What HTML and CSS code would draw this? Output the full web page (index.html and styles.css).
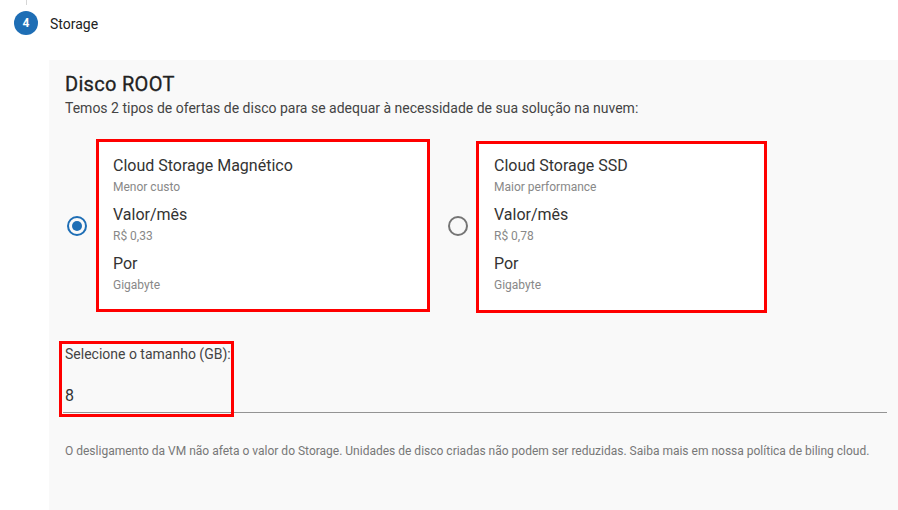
FILE: index.html
```html
<!DOCTYPE html>
<html lang="pt-BR">
<head>
<meta charset="utf-8">
<title>Storage</title>
<link rel="stylesheet" href="styles.css">
</head>
<body>
<div class="step">
  <div class="step-marker">
    <span class="step-line"></span>
    <span class="step-num">4</span>
  </div>
  <span class="step-label">Storage</span>
</div>
<section class="panel">
  <h2 class="panel-title">Disco ROOT</h2>
  <p class="panel-sub">Temos 2 tipos de ofertas de disco para se adequar à necessidade de sua solução na nuvem:</p>
  <div class="options">
    <label class="option">
      <span class="radio checked"></span>
      <div class="card card-a">
        <div class="item-title">Cloud Storage Magnético</div>
        <div class="item-sub">Menor custo</div>
        <div class="item-title gap">Valor/mês</div>
        <div class="item-sub">R$ 0,33</div>
        <div class="item-title gap">Por</div>
        <div class="item-sub">Gigabyte</div>
      </div>
    </label>
    <label class="option option-b">
      <span class="radio"></span>
      <div class="card card-b">
        <div class="item-title">Cloud Storage SSD</div>
        <div class="item-sub">Maior performance</div>
        <div class="item-title gap">Valor/mês</div>
        <div class="item-sub">R$ 0,78</div>
        <div class="item-title gap">Por</div>
        <div class="item-sub">Gigabyte</div>
      </div>
    </label>
  </div>
  <div class="field">
    <div class="field-label">Selecione o tamanho (GB):</div>
    <div class="field-value">8</div>
    <span class="highlight"></span>
  </div>
  <p class="note">O desligamento da VM não afeta o valor do Storage. Unidades de disco criadas não podem ser reduzidas. Saiba mais em nossa política de biling cloud.</p>
</section>
</body>
</html>
```

FILE: styles.css
```css
* { box-sizing: border-box; }
html, body { margin: 0; padding: 0; background: #fff; }
body {
  font-family: Roboto, "Liberation Sans", Arial, sans-serif;
  color: #222;
  width: 898px;
  height: 510px;
  overflow: hidden;
}
.step {
  display: flex;
  align-items: flex-start;
  height: 60px;
}
.step-marker {
  width: 52px;
  padding-left: 14px;
  display: flex;
  flex-direction: column;
}
.step-line {
  display: block;
  width: 1px;
  height: 5px;
  background: #d6d6d6;
  margin-left: 12px;
  margin-bottom: 6px;
}
.step-num {
  width: 24px;
  height: 24px;
  border-radius: 50%;
  background: #1e6eb5;
  color: #fff;
  font-size: 12px;
  font-weight: 700;
  display: flex;
  align-items: center;
  justify-content: center;
}
.step-label {
  margin-left: -2px;
  margin-top: 16px;
  font-size: 14px;
  line-height: 16px;
  color: #222;
}
.panel {
  margin-left: 49px;
  background: #f9f9f9;
  padding: 12px 11px 60px 16px;
  min-height: 460px;
}
.panel-title {
  margin: 0;
  font-size: 20px;
  line-height: 24px;
  font-weight: 400;
  letter-spacing: 0.3px;
  color: #222;
  -webkit-text-stroke: 0.3px #222;
}
.panel-sub {
  margin: 2px 0 0;
  font-size: 14px;
  line-height: 20px;
  color: #444;
}
.options {
  display: flex;
  align-items: center;
  margin-top: 20px;
}
.option {
  display: flex;
  align-items: center;
}
.option-b { margin-left: 16px; }
.radio {
  width: 20px;
  height: 20px;
  border-radius: 50%;
  border: 2px solid #757575;
  margin-left: 2px;
  margin-right: 9px;
  display: flex;
  align-items: center;
  justify-content: center;
}
.option-b .radio { margin-right: 8px; }
.radio.checked { border-color: #1e6eb5; }
.radio.checked::after {
  content: "";
  width: 10px;
  height: 10px;
  border-radius: 50%;
  background: #1e6eb5;
}
.card {
  background: #fff;
  border: 3px solid #ff0000;
  padding: 14px 14px 16px;
}
.card-a { width: 334px; height: 173px; }
.card-b { width: 291px; height: 172px; padding-left: 15px; padding-top: 12px; margin-top: 3px; }
.item-title {
  font-size: 16px;
  line-height: 20px;
  color: #333;
}
.item-title.gap { margin-top: 10px; }
.item-sub {
  margin-top: 3px;
  font-size: 12px;
  line-height: 16px;
  color: #888;
}
.field {
  position: relative;
  margin: 25px 0 0 -2px;
  padding-left: 2px;
  border-bottom: 1px solid #949494;
  height: 75px;
}
.field-label {
  padding-top: 7px;
  font-size: 14px;
  line-height: 18px;
  color: #444;
}
.field-value {
  margin-top: 23px;
  font-size: 16px;
  line-height: 20px;
  color: #333;
}
.highlight {
  position: absolute;
  left: -4px;
  top: 3px;
  width: 175px;
  height: 76px;
  border: 3px solid #ff0000;
}
.note {
  margin: 30px 0 0;
  font-size: 12px;
  line-height: 16px;
  color: #777;
}
```
